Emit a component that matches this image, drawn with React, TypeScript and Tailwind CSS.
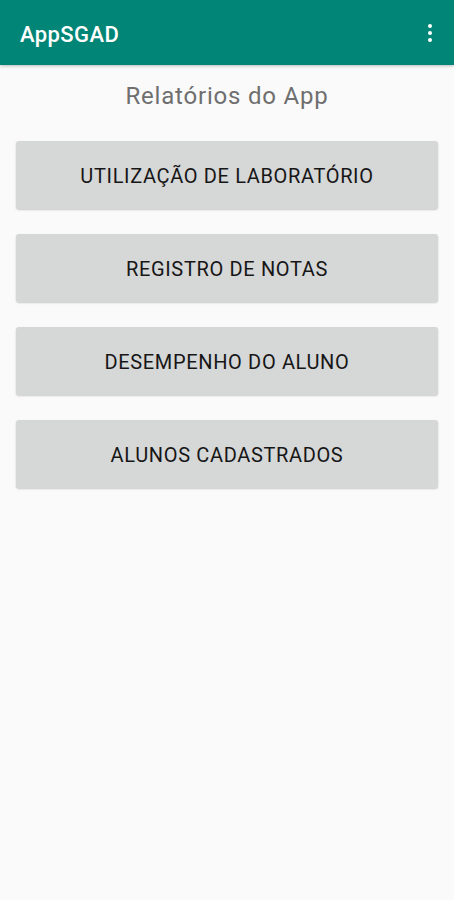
import React from "react";

const items = [
  "UTILIZAÇÃO DE LABORATÓRIO",
  "REGISTRO DE NOTAS",
  "DESEMPENHO DO ALUNO",
  "ALUNOS CADASTRADOS",
];

export default function App() {
  return (
    <div
      className="w-[454px] h-[900px] bg-[#fafafa] flex flex-col"
      style={{ fontFamily: "Roboto, 'Noto Sans', sans-serif" }}
    >
      <header className="h-[65px] bg-[#008577] flex items-center justify-between pl-[20px] pr-[20px] shadow-[0_1px_3px_rgba(0,0,0,0.25)] relative z-10">
        <span className="text-white text-[22px] font-medium tracking-[0.4px] mt-[3px]">AppSGAD</span>
        <div className="flex flex-col items-center gap-[3px] mr-[2px]">
          <span className="w-[4px] h-[4px] rounded-full bg-white" />
          <span className="w-[4px] h-[4px] rounded-full bg-white" />
          <span className="w-[4px] h-[4px] rounded-full bg-white" />
        </div>
      </header>
      <div className="text-center text-[24px] text-[#6f6f6f] mt-[16px] leading-[30px] tracking-[0.8px]">
        Relatórios do App
      </div>
      <div className="flex flex-col gap-[25px] px-[16px] mt-[30px]">
        {items.map((t) => (
          <button
            key={t}
            className="h-[68px] w-full bg-[#d6d7d7] rounded-[3px] shadow-[0_1px_2px_rgba(0,0,0,0.2)] text-[20px] font-normal text-[#161616] tracking-[0.65px] pt-[2px]"
          >
            {t}
          </button>
        ))}
      </div>
    </div>
  );
}
